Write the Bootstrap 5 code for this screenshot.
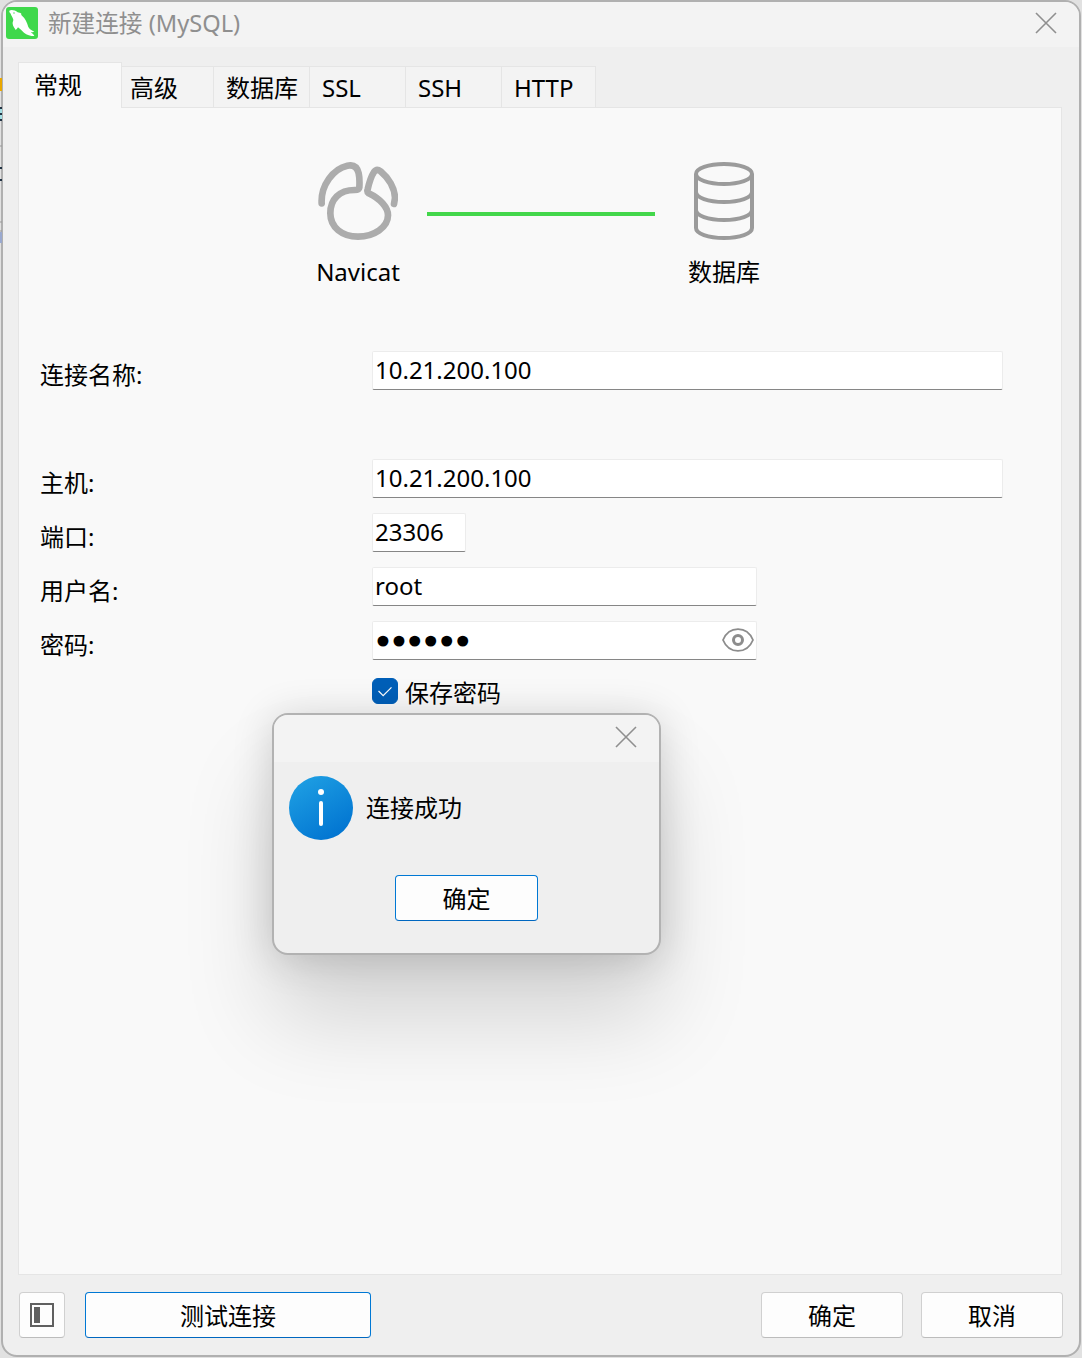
<!DOCTYPE html>
<html lang="zh-CN">
<head>
<meta charset="utf-8">
<meta name="viewport" content="width=device-width, initial-scale=1">
<title>新建连接 (MySQL)</title>
<link href="https://cdn.jsdelivr.net/npm/bootstrap@5.3.0/dist/css/bootstrap.min.css" rel="stylesheet">
<style>
body{font-family:"Noto Sans","Noto Sans CJK SC",sans-serif;font-size:24px;line-height:32px;color:#000;background:#e1e1e1;padding:0 1px 1px}
.behind{left:0;top:0;width:2px;height:260px}
.win{border:2px solid #b0b0b0;border-radius:16px;background:#efefef;min-height:calc(100vh - 1px)}
.win-title{height:45px;background:#f3f3f3;border-radius:14px 14px 0 0;color:#8f8f8f;padding-left:3px;padding-right:19px}
.win-logo{margin-bottom:3px}
.win-name{margin:0 0 2px 10px}
.title-close{width:28px;height:28px;margin-bottom:4px}
.win-body{padding:15px 17px 17px 15px}
.nav-tabs{--bs-nav-tabs-border-width:0px}
.nav-tabs .nav-link{width:96px;height:41px;margin:0;padding:2px 0 0 12px;color:#000;text-align:left;white-space:nowrap;background:#f3f3f3;border:1px solid #e5e5e5;border-width:1px 1px 0 0;border-radius:0}
.nav-tabs .nav-link:last-child{width:94px}
.nav-tabs .nav-link.active{width:104px;height:46px;margin-bottom:-1px;padding:0 0 2px 15px;color:#000;background:#f9f9f9;border:1px solid #e5e5e5;border-bottom:0;position:relative;z-index:1}
.nav-tabs .tab-short{width:92px;padding-left:8px}
.pane{background:#f9f9f9;border:1px solid #e5e5e5}
.diagram{padding:54px 0 63px 2px;gap:9px}
.node{width:120px}
.node svg{margin-bottom:16px}
.link-line{width:228px;height:4px;margin-top:50px;background:#43d74b}
.fields{padding:0 58px 0 21px}
.field{height:54px}
.field-gap{margin-bottom:54px}
.field-label{width:332px;padding-top:8px}
.box{height:39px;padding:0 2px 2px;font-size:24px;color:#000;background:#fff;border:1px solid #ececec;border-bottom-color:#868686;border-radius:2px}
.box-port{width:94px}
.box-mid{width:385px}
.box-secret{font-family:"DejaVu Sans",sans-serif;font-size:27px;padding:2px 36px 0 2px;-webkit-text-stroke:3px #000}
.eye{right:2px;top:2px;width:34px;height:34px}
.save-check{width:26px;height:26px;border-radius:5px;margin:3px 7px 0 0}
.save-label{padding-top:2px}
.save-check:checked{background-color:#005fb8;border-color:#005fb8;background-image:url("data:image/svg+xml,%3csvg xmlns='http://www.w3.org/2000/svg' viewBox='0 0 26 26'%3e%3cpath d='M6 13l5 5 9-9' fill='none' stroke='%23fff' stroke-width='1.3'/%3e%3c/svg%3e")}
.btn-win{height:46px;padding:2px 0 0;min-width:142px;font-size:24px;line-height:32px;color:#000;background:#fdfdfd;border:1px solid #d0d0d0;border-bottom-color:#bcbcbc;border-radius:4px}
.btn-accent{min-width:143px;border-color:#0078d4;border-bottom-color:#0067c0}
.btn-panel{min-width:46px;width:46px}
.btn-test{width:286px;margin-left:20px}
.foot{padding:17px 0 0 1px;margin-right:-1px}
.btn-cancel{margin-left:18px}
.msg{left:272px;top:713px;width:389px;border:2px solid #b2b2b2;border-radius:16px;background:#efefef;box-shadow:0 64px 90px rgba(0,0,0,.15),0 4px 40px rgba(0,0,0,.16)}
.msg-title{height:47px;padding-right:19px;background:#f3f3f3;border-radius:14px 14px 0 0}
.msg-body{padding:14px 15px 32px}
.msg-row{gap:13px;margin-bottom:35px}
</style>
<script src="https://cdn.jsdelivr.net/npm/bootstrap@5.3.0/dist/js/bootstrap.bundle.min.js"></script>
</head>
<body class="position-relative">
<svg class="behind position-absolute" viewBox="0 0 2 260" aria-hidden="true"><rect y="78" width="2" height="13" fill="#eaa800"/><rect y="108" width="2" height="13" fill="#a5dfe4"/><path d="M0 108h2M0 114h2M0 120h2M0 168h2M0 180h2" stroke="#234" stroke-width="2"/><path d="M0 146h2M0 222h2M0 231h2" stroke="#999"/><rect y="232" width="2" height="11" fill="#9aa9cf"/></svg>

<main class="win d-flex flex-column">
  <header class="win-title d-flex align-items-center">
    <svg class="win-logo" width="32" height="32" viewBox="0 0 96 96" aria-hidden="true"><rect width="96" height="96" rx="9" fill="#3fd84b"/><path d="M10 11C16 7 28 10 35 16 39 17 43 17 46 20 45 22 46 24 48 26 58 34 63 46 67 60 70 67 78 71 85 74 81 76 77 75 74 76 78 79 83 82 85 87 74 87 62 84 54 77 48 71 42 66 36 61 34 64 32 67 29 69 27 63 20 58 20 50 19 46 22 42 22 38 20 30 16 26 14 20 12 17 9 15 10 11Z" fill="#fff"/><circle cx="24" cy="18" r="2" fill="#3fd84b"/></svg>
    <h1 class="win-name fs-4 fw-normal">新建连接 (MySQL)</h1>
    <button class="title-close ms-auto p-0 border-0 bg-transparent d-flex align-items-center justify-content-center" type="button" aria-label="关闭"><svg width="22" height="22" viewBox="0 0 22 22"><path d="M1 1l20 20M21 1L1 21" stroke="#8f8f8f" stroke-width="1.6"/></svg></button>
  </header>

  <div class="win-body d-flex flex-column flex-grow-1">
    <div class="nav nav-tabs flex-nowrap align-items-end" role="tablist">
      <button class="nav-link active" type="button" role="tab" aria-selected="true">常规</button>
      <button class="nav-link tab-short" type="button" role="tab">高级</button>
      <button class="nav-link" type="button" role="tab">数据库</button>
      <button class="nav-link" type="button" role="tab">SSL</button>
      <button class="nav-link" type="button" role="tab">SSH</button>
      <button class="nav-link" type="button" role="tab">HTTP</button>
    </div>

    <section class="pane flex-grow-1">
      <div class="diagram d-flex justify-content-center">
        <div class="node d-flex flex-column align-items-center">
          <svg width="80" height="78" viewBox="0 0 240 234" fill="none" stroke="#acacac" stroke-width="20" stroke-linecap="round" stroke-linejoin="round"><path d="M11 124C8 70 46 20 88 11 108 7 118 16 122 34 125 48 125 60 124 76 123 82 118 84 110 84 64 84 37 112 37 154 37 196 72 224 120 224 168 224 210 196 210 160 210 136 186 110 152 94 148 91 147 88 149 82 154 60 160 42 168 30 174 22 180 22 188 28 212 48 230 78 231 108L228 126"/></svg>
          <span>Navicat</span>
        </div>
        <div class="link-line"></div>
        <div class="node d-flex flex-column align-items-center">
          <svg width="60" height="78" viewBox="0 0 60 78" fill="none" stroke="#9b9b9b" stroke-width="4"><ellipse cx="30" cy="12" rx="28" ry="10"/><path d="M2 12v54c0 5.500 12 10 28 10s28-4.500 28-10V12M2 30c0 5.500 12 10 28 10s28-4.500 28-10M2 48c0 5.500 12 10 28 10s28-4.500 28-10"/></svg>
          <span>数据库</span>
        </div>
      </div>

      <form class="fields">
        <div class="field field-gap d-flex align-items-start"><label class="field-label" for="name">连接名称:</label><input class="box flex-grow-1" id="name" type="text" value="10.21.200.100"></div>
        <div class="field d-flex align-items-start"><label class="field-label" for="host">主机:</label><input class="box flex-grow-1" id="host" type="text" value="10.21.200.100"></div>
        <div class="field d-flex align-items-start"><label class="field-label" for="port">端口:</label><input class="box box-port" id="port" type="text" value="23306"></div>
        <div class="field d-flex align-items-start"><label class="field-label" for="user">用户名:</label><input class="box box-mid" id="user" type="text" value="root"></div>
        <div class="field d-flex align-items-start"><label class="field-label" for="pass">密码:</label>
          <div class="position-relative"><input class="box box-mid box-secret" id="pass" type="password" value="secret"><button class="eye position-absolute p-0 border-0 bg-transparent d-flex align-items-center justify-content-center" type="button" aria-label="显示密码"><svg width="32" height="24" viewBox="0 0 32 24" fill="none" stroke="#8c8c8c"><path d="M1 12C7-2.500 25-2.500 31 12 25 26.500 7 26.500 1 12Z" stroke-width="1.800"/><circle cx="16" cy="12" r="4.500" stroke-width="3"/></svg></button></div></div>
        <div class="d-flex align-items-start"><span class="field-label p-0"></span><input class="save-check form-check-input" id="save" type="checkbox" checked><label class="save-label" for="save">保存密码</label></div>
      </form>
    </section>

    <footer class="foot d-flex">
      <button class="btn btn-win btn-panel d-flex align-items-center justify-content-center p-0" type="button" aria-label="面板"><svg width="24" height="24" viewBox="0 0 24 24"><path d="M1 1h22v22H1z" fill="none" stroke="#606060" stroke-width="2"/><path d="M4 4h6v16H4z" fill="#606060"/></svg></button>
      <button class="btn btn-win btn-accent btn-test" type="button">测试连接</button>
      <button class="btn btn-win ms-auto" type="button">确定</button>
      <button class="btn btn-win btn-cancel" type="button">取消</button>
    </footer>
  </div>
</main>

<section class="msg position-absolute" role="dialog" aria-label="连接成功">
  <div class="msg-title d-flex align-items-center justify-content-end"><button class="title-close p-0 border-0 bg-transparent d-flex align-items-center justify-content-center" type="button" aria-label="关闭"><svg width="22" height="22" viewBox="0 0 22 22"><path d="M1 1l20 20M21 1L1 21" stroke="#8f8f8f" stroke-width="1.6"/></svg></button></div>
  <div class="msg-body">
    <div class="msg-row d-flex align-items-center">
      <svg width="64" height="64" viewBox="0 0 64 64" aria-hidden="true"><defs><linearGradient id="info" x1="0.200" y1="0" x2="0.800" y2="1"><stop stop-color="#1e9fe3"/><stop offset="1" stop-color="#0072d0"/></linearGradient></defs><circle cx="32" cy="32" r="32" fill="url(#info)"/><circle cx="32" cy="16" r="3" fill="#fff"/><path d="M32 27v21" stroke="#fff" stroke-width="4" stroke-linecap="round"/></svg>
      <span>连接成功</span>
    </div>
    <div class="d-flex justify-content-center"><button class="btn btn-win btn-accent" type="button">确定</button></div>
  </div>
</section>
</body>
</html>
